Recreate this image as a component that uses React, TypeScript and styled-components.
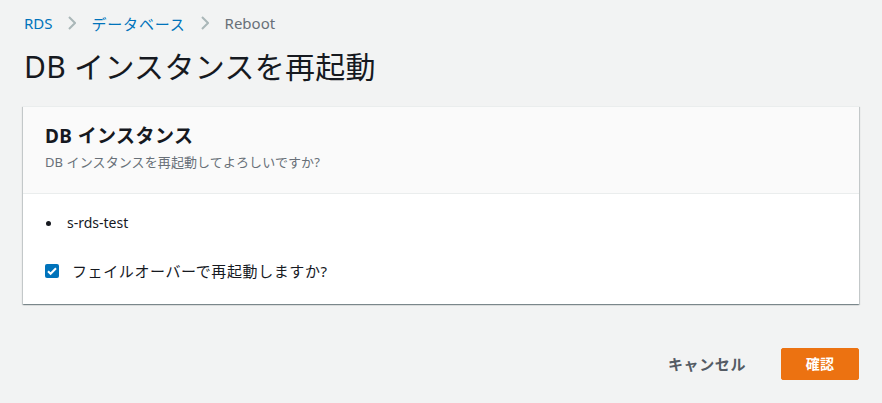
import React from 'react';
import styled, { createGlobalStyle } from 'styled-components';

const GlobalStyle = createGlobalStyle`
  body {
    margin: 0;
    background: #f2f3f3;
    font-family: "Noto Sans", "Noto Sans CJK JP", sans-serif;
    color: #16191f;
  }
`;

const Page = styled.div`
  padding: 12px 23px 0 23px;
`;

const Breadcrumbs = styled.nav`
  display: flex;
  align-items: center;
  height: 22px;
  font-size: 15px;
  padding-left: 1px;
`;

const Crumb = styled.span<{ $link?: boolean; $wide?: boolean }>`
  color: ${(p) => (p.$link ? '#0073bb' : '#687078')};
  letter-spacing: ${(p) => (p.$wide ? '0.8px' : '0')};
`;

const Chevron = styled.svg`
  width: 8px;
  height: 14px;
  margin: 0 16px 0 15px;
`;

const Title = styled.h1`
  margin: 14px 0 0 1px;
  font-size: 30px;
  font-weight: 400;
  line-height: 38px;
  letter-spacing: 0.3px;
`;

const Card = styled.section`
  margin-top: 20px;
  background: #fff;
  box-shadow: 0 1px 1px 0 rgba(0, 28, 36, 0.3), 1px 1px 1px 0 rgba(0, 28, 36, 0.15),
    -1px 1px 1px 0 rgba(0, 28, 36, 0.15);
  border-top: 1px solid #eaeded;
`;

const CardHeader = styled.header`
  background: #fafafa;
  border-bottom: 1px solid #eaeded;
  padding: 16px 22px 22px;
`;

const CardTitle = styled.h2`
  margin: 0;
  font-size: 19px;
  font-weight: 700;
  line-height: 26px;
  letter-spacing: 0.4px;
`;

const CardSub = styled.p`
  margin: 5px 0 0;
  font-size: 13px;
  line-height: 17px;
  letter-spacing: 0.1px;
  color: #687078;
`;

const CardBody = styled.div`
  padding: 18px 22px 22px;
`;

const List = styled.ul`
  margin: 0;
  padding: 0;
  list-style: none;
  font-size: 14px;
  line-height: 22px;
`;

const Item = styled.li`
  display: flex;
  align-items: center;
  padding-left: 1px;

  &::before {
    content: '';
    width: 5px;
    height: 5px;
    border-radius: 50%;
    background: #16191f;
    margin-right: 16px;
  }
`;

const CheckRow = styled.label`
  display: flex;
  align-items: center;
  gap: 13px;
  margin-top: 26px;
  font-size: 15px;
  line-height: 22px;
  letter-spacing: 0.6px;
`;

const Box = styled.span`
  width: 14px;
  height: 14px;
  border-radius: 2px;
  background: #0073bb;
  display: flex;
  align-items: center;
  justify-content: center;
`;

const Actions = styled.div`
  display: flex;
  justify-content: flex-end;
  align-items: center;
  gap: 14px;
  margin-top: 44px;
`;

const Button = styled.button<{ $primary?: boolean }>`
  font-family: inherit;
  font-size: ${(p) => (p.$primary ? '14px' : '15px')};
  font-weight: 700;
  line-height: 20px;
  letter-spacing: ${(p) => (p.$primary ? '0.3px' : '0.6px')};
  height: 32px;
  padding: 0 20px;
  border: 1px solid ${(p) => (p.$primary ? '#ec7211' : 'transparent')};
  border-radius: 2px;
  background: ${(p) => (p.$primary ? '#ec7211' : 'transparent')};
  color: ${(p) => (p.$primary ? '#fff' : '#545b64')};
  min-width: ${(p) => (p.$primary ? '78px' : 'auto')};
`;

const ChevronIcon = () => (
  <Chevron viewBox="0 0 8 14">
    <path d="M1 1l6 6-6 6" fill="none" stroke="#aab7b8" strokeWidth="2" />
  </Chevron>
);

export default function App() {
  return (
    <>
      <GlobalStyle />
      <Page>
        <Breadcrumbs>
          <Crumb $link>RDS</Crumb>
          <ChevronIcon />
          <Crumb $link $wide>データベース</Crumb>
          <ChevronIcon />
          <Crumb>Reboot</Crumb>
        </Breadcrumbs>
        <Title>DB インスタンスを再起動</Title>
        <Card>
          <CardHeader>
            <CardTitle>DB インスタンス</CardTitle>
            <CardSub>DB インスタンスを再起動してよろしいですか?</CardSub>
          </CardHeader>
          <CardBody>
            <List>
              <Item>s-rds-test</Item>
            </List>
            <CheckRow>
              <Box>
                <svg width="12" height="12" viewBox="0 0 12 12">
                  <path d="M2 6.2l2.6 2.6L10 3.2" fill="none" stroke="#fff" strokeWidth="2" />
                </svg>
              </Box>
              フェイルオーバーで再起動しますか?
            </CheckRow>
          </CardBody>
        </Card>
        <Actions>
          <Button>キャンセル</Button>
          <Button $primary>確認</Button>
        </Actions>
      </Page>
    </>
  );
}
